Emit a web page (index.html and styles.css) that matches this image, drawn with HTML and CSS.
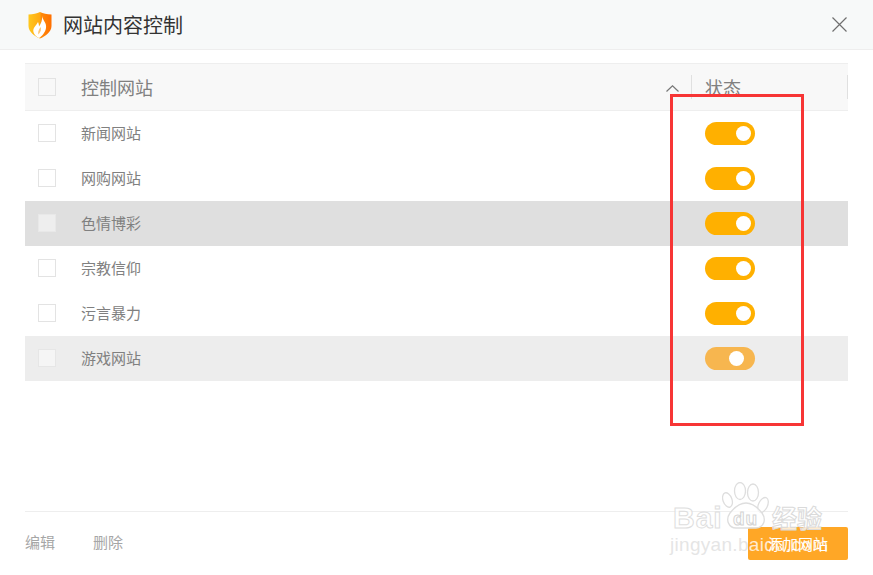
FILE: index.html
```html
<!DOCTYPE html>
<html lang="zh-CN">
<head>
<meta charset="utf-8">
<title>网站内容控制</title>
<link rel="stylesheet" href="styles.css">
</head>
<body>
<div class="app">
  <header class="titlebar">
    <svg class="logo" width="26" height="28" viewBox="0 0 26 28">
      <defs>
        <linearGradient id="sh" x1="0" y1="0" x2="1" y2="0">
          <stop offset="0" stop-color="#ffc81e"/>
          <stop offset="0.5" stop-color="#ffa912"/>
          <stop offset="0.55" stop-color="#ff8a0a"/>
          <stop offset="1" stop-color="#ff6f00"/>
        </linearGradient>
      </defs>
      <path d="M1.500 3.500 C6 3.200 10 2.600 13 1 C16 2.600 20 3.200 24.500 3.500 L24.500 15 C24.500 21 18 25.500 13 27.500 C8 25.500 1.500 21 1.500 15 Z" fill="url(#sh)"/>
      <path d="M15 5 C15.500 9 20 12 19 17 C18.300 21.500 15 25 12 27 C8 25 5.500 21.500 6.500 18 C7.300 15.500 10 13.500 11 11 C11.800 13 12 14 12 15.500 C14 12.500 15.500 9 15 5 Z" fill="#fff"/>
      <path d="M13.500 16 C14.500 18 14 20.500 11.500 23.500 C10.500 21.500 11.500 19 13.500 16 Z" fill="#ffc46e"/>
    </svg>
    <h1 class="title">网站内容控制</h1>
    <svg class="close" width="15" height="15" viewBox="0 0 15 15"><path d="M0.500 0.500 L14.500 14.500 M14.500 0.500 L0.500 14.500" stroke="#6f6f6f" stroke-width="1.200" fill="none"/></svg>
  </header>

  <main class="table">
    <div class="row head">
      <span class="check"></span>
      <span class="name">控制网站</span>
      <svg class="sort" width="13" height="7" viewBox="0 0 13 7"><path d="M0.500 6.500 L6.500 0.800 L12.500 6.500" stroke="#777" stroke-width="1.200" fill="none"/></svg>
      <span class="status">状态</span>
    </div>
    <div class="row"><span class="check"></span><span class="name">新闻网站</span><span class="switch"><i class="knob"></i></span></div>
    <div class="row"><span class="check"></span><span class="name">网购网站</span><span class="switch"><i class="knob"></i></span></div>
    <div class="row active"><span class="check"></span><span class="name">色情博彩</span><span class="switch"><i class="knob"></i></span></div>
    <div class="row"><span class="check"></span><span class="name">宗教信仰</span><span class="switch"><i class="knob"></i></span></div>
    <div class="row"><span class="check"></span><span class="name">污言暴力</span><span class="switch"><i class="knob"></i></span></div>
    <div class="row hover"><span class="check"></span><span class="name">游戏网站</span><span class="switch moving"><i class="knob"></i></span></div>
  </main>

  <footer class="footer">
    <a class="link">编辑</a>
    <a class="link">删除</a>
    <button class="add">添加网站</button>
  </footer>

  <div class="annotation"></div>

  <div class="watermark">
    <div class="wm-top">
      <span class="wm-bai">Bai</span>
      <svg class="wm-paw" width="48" height="50" viewBox="0 0 48 50">
        <g fill="rgba(255,255,255,0.7)" stroke="#dedede" stroke-width="1.300">
          <ellipse cx="5.500" cy="18" rx="4.500" ry="7.500" transform="rotate(-20 5.500 18)"/>
          <ellipse cx="18" cy="9" rx="5.500" ry="8.500"/>
          <ellipse cx="31" cy="10.500" rx="5.500" ry="8.500"/>
          <ellipse cx="41" cy="23" rx="4.500" ry="8" transform="rotate(25 41 23)"/>
          <path d="M24 21 C31 21 36 26 40 31 C45 38 41 46 34 46 C28 46 20 46 14 46 C7 46 3 38 8 31 C12 26 17 21 24 21 Z"/>
        </g>
      </svg>
      <span class="wm-du">du</span>
      <span class="wm-cn">经验</span>
    </div>
    <div class="wm-url">jingyan.b<span class="wm-on-button">aidu.com</span></div>
  </div>
</div>
</body>
</html>
```

FILE: styles.css
```css
* { box-sizing: border-box; }

html, body {
  margin: 0;
  padding: 0;
  background: #fff;
}

body {
  font-family: "Noto Sans CJK SC", "Liberation Sans", sans-serif;
}

.app {
  position: relative;
  width: 873px;
  height: 575px;
  overflow: hidden;
  display: flex;
  flex-direction: column;
}

.titlebar {
  height: 50px;
  flex: none;
  display: flex;
  align-items: center;
  background: #f7f9f9;
  border-bottom: 1px solid #eeeeee;
  padding: 0 26px 0 27px;
}

.logo {
  flex: none;
  margin-right: 10px;
}

.title {
  margin: 0;
  font-size: 20px;
  font-weight: 400;
  color: #333;
  line-height: 1;
  flex: 1;
}

.close {
  flex: none;
}

.table {
  flex: none;
  margin: 13px 25px 0;
}

.row {
  display: flex;
  align-items: center;
  height: 45px;
  padding-left: 13px;
  font-size: 15px;
  color: #808080;
  position: relative;
}

.head {
  height: 48px;
  background: #f8f8f8;
  border-top: 1px solid #eeeeee;
  border-bottom: 1px solid #eeeeee;
  font-size: 18px;
  color: #808080;
}

.active { background: #dfdfdf; }
.hover { background: #ededed; }

.check {
  flex: none;
  width: 18px;
  height: 18px;
  border: 1px solid #e3e3e3;
  background: #fff;
  margin-right: 25px;
  margin-bottom: 1px;
}

.head .check { background: #f8f8f8; margin-bottom: 0; }
.active .check { background: #eeeeee; border-color: #e8e8e8; }
.hover .check { background: #f5f5f5; border-color: #e6e6e6; }

.name {
  flex: 1;
  line-height: 1;
  margin-bottom: 2px;
}

.head .name { margin-bottom: 0; }

.sort {
  flex: none;
  margin: 2px 12px 0 0;
}

.status {
  flex: none;
  width: 157px;
  height: 24px;
  line-height: 24px;
  padding-left: 13px;
  border-left: 1px solid #e0e0e0;
  border-right: 1px solid #e0e0e0;
}

.switch {
  flex: none;
  width: 50px;
  height: 23px;
  border-radius: 12px;
  background: #ffb000;
  margin-right: 93px;
  display: flex;
  align-items: center;
  justify-content: flex-end;
  padding-right: 4px;
}

.knob {
  display: block;
  width: 15px;
  height: 15px;
  border-radius: 50%;
  background: #fff;
}

.moving { background: #f7b64f; padding-right: 11px; }

.footer {
  position: absolute;
  left: 25px;
  right: 25px;
  top: 511px;
  height: 50px;
  border-top: 1px solid #eeeeee;
  display: flex;
  align-items: flex-start;
}

.link {
  font-size: 15px;
  line-height: 20px;
  color: #a6a6a6;
  margin-top: 20px;
  margin-right: 38px;
}

.add {
  margin: 15px 0 0 auto;
  width: 100px;
  height: 33px;
  border: 0;
  border-radius: 2px;
  background: #ffa726;
  color: #fff;
  font-family: inherit;
  font-size: 15px;
  padding: 0;
}

.annotation {
  position: absolute;
  left: 670px;
  top: 94px;
  width: 134px;
  height: 332px;
  border: 3px solid #f73535;
  pointer-events: none;
}

.watermark {
  position: absolute;
  left: 670px;
  top: 480px;
  width: 190px;
  pointer-events: none;
}

.wm-top {
  height: 53px;
  position: relative;
}

.wm-bai {
  position: absolute;
  left: 3px;
  top: 23px;
  font-family: "Liberation Sans", sans-serif;
  font-weight: 700;
  font-size: 30px;
  line-height: 30px;
  letter-spacing: 1px;
  color: rgba(255, 255, 255, 0.75);
  -webkit-text-stroke: 1px #dedede;
}

.wm-paw {
  position: absolute;
  left: 52px;
  top: 2px;
}

.wm-du {
  position: absolute;
  left: 63px;
  top: 29px;
  font-family: "Liberation Sans", sans-serif;
  font-weight: 700;
  font-size: 19px;
  line-height: 20px;
  letter-spacing: 1px;
  color: rgba(255, 255, 255, 0.6);
  -webkit-text-stroke: 1px #d4d4d4;
}

.wm-cn {
  position: absolute;
  left: 102px;
  top: 21px;
  font-size: 25px;
  line-height: 32px;
  font-weight: 700;
  color: rgba(255, 255, 255, 0.8);
  -webkit-text-stroke: 1px #dadada;
}

.wm-url {
  font-family: "Liberation Sans", sans-serif;
  font-size: 19px;
  line-height: 24px;
  letter-spacing: 0.3px;
  white-space: nowrap;
  color: rgba(222, 222, 222, 0.8);
}

.wm-on-button {
  color: rgba(255, 255, 255, 0.78);
}
```
